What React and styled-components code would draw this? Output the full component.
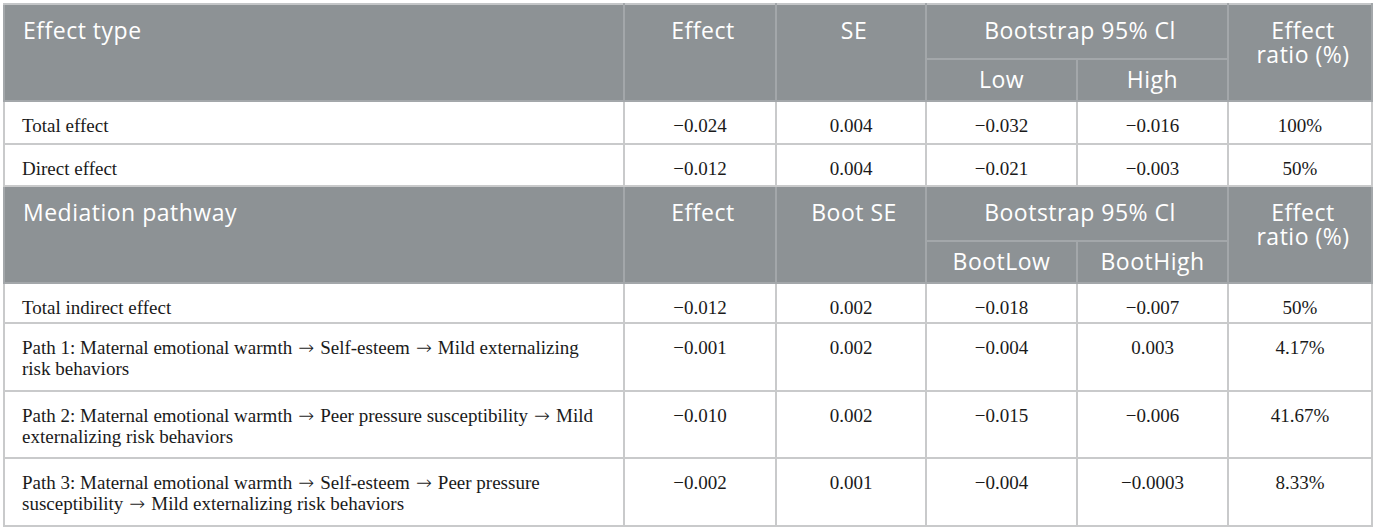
import styled, { createGlobalStyle } from 'styled-components';

const GlobalStyle = createGlobalStyle`
    html, body {
        margin: 0;
        padding: 0;
        background: #fff;
    }
`

const widths = [620, 152, 150, 151, 151, 144];

const effectRows = [
    { label: 'Total effect', values: ['\u22120.024', '0.004', '\u22120.032', '\u22120.016', '100%'] },
    { label: 'Direct effect', values: ['\u22120.012', '0.004', '\u22120.021', '\u22120.003', '50%'] },
];

// each label line is split where an arrow goes, so the arrow can get its own font
const pathwayRows = [
    { label: [['Total indirect effect']], values: ['\u22120.012', '0.002', '\u22120.018', '\u22120.007', '50%'], height: 40 },
    {
        label: [['Path 1: Maternal emotional warmth', 'Self-esteem', 'Mild externalizing'], ['risk behaviors']],
        values: ['\u22120.001', '0.002', '\u22120.004', '0.003', '4.17%'],
        height: 68,
    },
    {
        label: [['Path 2: Maternal emotional warmth', 'Peer pressure susceptibility', 'Mild'], ['externalizing risk behaviors']],
        values: ['\u22120.010', '0.002', '\u22120.015', '\u22120.006', '41.67%'],
        height: 67,
    },
    {
        label: [['Path 3: Maternal emotional warmth', 'Self-esteem', 'Peer pressure'], ['susceptibility', 'Mild externalizing risk behaviors']],
        values: ['\u22120.002', '0.001', '\u22120.004', '\u22120.0003', '8.33%'],
        height: 68,
    },
];

function HeaderBlock({ title, second, low, high }) {
    return (
        <>
            <HeadRow $h={55}>
                <HeadCell rowSpan={2} $align='left'>{title}</HeadCell>
                <HeadCell rowSpan={2}>Effect</HeadCell>
                <HeadCell rowSpan={2}>{second}</HeadCell>
                <HeadCell colSpan={2}>Bootstrap 95% Cl</HeadCell>
                <HeadCell rowSpan={2}>
                    <RatioLine>Effect</RatioLine>
                    <RatioLine>ratio (%)</RatioLine>
                </HeadCell>
            </HeadRow>
            <HeadRow $h={42}>
                <SubHeadCell>{low}</SubHeadCell>
                <SubHeadCell>{high}</SubHeadCell>
            </HeadRow>
        </>
    )
}

function PathLabel({ lines }) {
    return lines.map((parts, i) => (
        <span key={i}>
            {i > 0 && <br />}
            {parts.map((p, j) => (
                <span key={j}>
                    {j > 0 && <Arrow>{' \u2192 '}</Arrow>}
                    {p}
                </span>
            ))}
        </span>
    ))
}

function App() {
    return (
        <>
            <GlobalStyle />
            <Page>
                <Table>
                    <colgroup>
                        {widths.map((w, i) => (
                            <col key={i} style={{ width: w }} />
                        ))}
                    </colgroup>
                    <thead>
                        <HeaderBlock title='Effect type' second='SE' low='Low' high='High' />
                    </thead>
                    <tbody>
                        {effectRows.map((row, idx) => (
                            <BodyRow key={row.label} $h={idx === 0 ? 43 : 42}>
                                <LabelCell>{row.label}</LabelCell>
                                {row.values.map((v, i) => (
                                    <NumCell key={i}>{v}</NumCell>
                                ))}
                            </BodyRow>
                        ))}
                    </tbody>
                    <tbody>
                        <HeaderBlock title='Mediation pathway' second='Boot SE' low='BootLow' high='BootHigh' />
                        {pathwayRows.map((row) => (
                            <BodyRow key={row.label[0][0]} $h={row.height}>
                                <LabelCell>
                                    <PathLabel lines={row.label} />
                                </LabelCell>
                                {row.values.map((v, i) => (
                                    <NumCell key={i}>{v}</NumCell>
                                ))}
                            </BodyRow>
                        ))}
                    </tbody>
                </Table>
            </Page>
        </>
    )
}

const Page = styled.div`
    padding: 3px 0 0 3px;
`
const Table = styled.table`
    width: 1370px;
    table-layout: fixed;
    border-collapse: collapse;
    border: 2px solid #c4c6c8;
`
const HeadRow = styled.tr`
    height: ${(p) => p.$h}px;
`
const HeadCell = styled.th`
    background-color: #8d9295;
    color: #fff;
    font-family: "Open Sans", "DejaVu Sans", sans-serif;
    font-weight: 400;
    font-size: 23px;
    letter-spacing: 0.5px;
    line-height: 24px;
    text-align: ${(p) => p.$align || 'center'};
    vertical-align: top;
    padding: 13px 12px 0 18px;
    border: 2px solid #a3a7aa;
    border-top-color: #c4c6c8;
`
const RatioLine = styled.div`
    line-height: 24px;
`
const SubHeadCell = styled(HeadCell)`
    padding: 7px 12px 0 12px;
    border-top-color: #a3a7aa;
`
const BodyRow = styled.tr`
    height: ${(p) => p.$h}px;
`
const LabelCell = styled.td`
    font-family: "Liberation Serif", "Times New Roman", serif;
    font-size: 19px;
    line-height: 21px;
    color: #1a1a1a;
    text-align: left;
    vertical-align: top;
    padding: 13px 12px 0 17px;
    border: 2px solid #c9cacb;
`
const NumCell = styled(LabelCell)`
    text-align: center;
    padding-left: 12px;
`
const Arrow = styled.span`
    font-family: "DejaVu Sans", sans-serif;
    font-size: 19px;
    font-weight: 200;
    line-height: 21px;
`

export default App;
